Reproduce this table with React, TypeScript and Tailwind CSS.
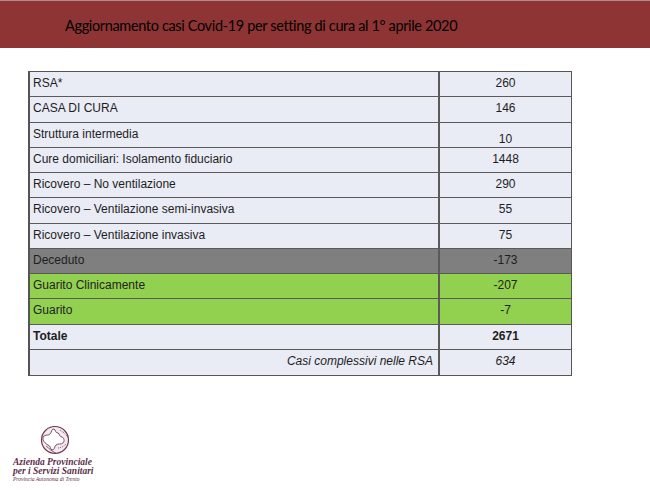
import React from "react";

type Row = {
  label: string;
  value: string;
  bg: string;
  bold?: boolean;
  italic?: boolean;
  valuePad?: string;
};

const rows: Row[] = [
  { label: "RSA*", value: "260", bg: "bg-[#e9ebf5]" },
  { label: "CASA DI CURA", value: "146", bg: "bg-[#e9ebf5]" },
  { label: "Struttura intermedia", value: "10", bg: "bg-[#e9ebf5]", valuePad: "pt-[8px]" },
  { label: "Cure domiciliari: Isolamento fiduciario", value: "1448", bg: "bg-[#e9ebf5]" },
  { label: "Ricovero – No ventilazione", value: "290", bg: "bg-[#e9ebf5]" },
  { label: "Ricovero – Ventilazione semi-invasiva", value: "55", bg: "bg-[#e9ebf5]" },
  { label: "Ricovero – Ventilazione invasiva", value: "75", bg: "bg-[#e9ebf5]" },
  { label: "Deceduto", value: "-173", bg: "bg-[#7f7f7f]" },
  { label: "Guarito Clinicamente", value: "-207", bg: "bg-[#92d050]" },
  { label: "Guarito", value: "-7", bg: "bg-[#92d050]" },
  { label: "Totale", value: "2671", bg: "bg-[#e9ebf5]", bold: true },
  { label: "Casi complessivi nelle RSA", value: "634", bg: "bg-[#e9ebf5]", italic: true },
];

function Logo() {
  return (
    <div className="flex flex-col items-start pl-[13px]">
      <svg width="34" height="32" viewBox="0 0 34 32" className="ml-[25px]">
        <circle cx="17" cy="16" r="13.5" fill="#f3eaef" stroke="#6b3a55" strokeWidth="1.2" />
        <path
          d="M5 13 C8 10 10 12 12 10 C14 8 13 5 16 5 C18 6 17 9 20 9 C22 10 21 13 24 13 C26 14 27 17 25 19 C23 21 20 19 18 21 C16 23 17 26 14 26 C12 25 13 22 10 21 C8 20 6 18 5 16 Z"
          fill="#ffffff"
          stroke="#6b3a55"
          strokeWidth="0.9"
        />
        <path d="M8 22 C11 24 14 28 18 29" fill="none" stroke="#6b3a55" strokeWidth="0.8" />
        <path d="M22 6 C25 8 28 10 30 14" fill="none" stroke="#6b3a55" strokeWidth="0.8" strokeDasharray="1 1" />
        <path d="M20 24 C23 24 26 22 28 20" fill="none" stroke="#6b3a55" strokeWidth="0.8" strokeDasharray="1 1" />
      </svg>
      <div
        className="mt-[2px] text-[#5b3048] italic font-bold text-[9.5px]"
        style={{ fontFamily: '"Liberation Serif", "DejaVu Serif", serif' }}
      >
        <div className="leading-[9px]">Azienda Provinciale</div>
        <div className="leading-[9px]">per i Servizi Sanitari</div>
        <div className="text-[5.5px] font-normal leading-[6px]">Provincia Autonoma di Trento</div>
      </div>
    </div>
  );
}

export default function App() {
  return (
    <div className="w-[650px] h-[490px] bg-white relative overflow-hidden">
      <div className="h-[48px] bg-[#8f3434] border-t border-[#b58a8a] flex items-center pl-[65px] pt-[3px]">
        <span
          className="text-black text-[14.5px] tracking-[-0.35px]"
          style={{ fontFamily: 'Lato, "Open Sans", sans-serif' }}
        >
          Aggiornamento casi Covid-19 per setting di cura al 1° aprile 2020
        </span>
      </div>

      <div
        className="ml-[28px] mt-[23px] w-[544px] border border-[#555] border-l-2 grid grid-cols-[408px_133px] text-[12px] text-[#1e1e1e]"
        style={{ fontFamily: '"Liberation Sans", Arial, sans-serif' }}
      >
        {rows.map((r, i) => (
          <React.Fragment key={i}>
            <div
              className={`h-[25.25px] ${r.bg} ${i < rows.length - 1 ? "border-b" : ""} border-[#5a5a5a] flex items-center ${
                r.italic ? "justify-end pr-[5px] italic" : "pl-[3px]"
              } ${r.bold ? "font-bold" : ""} pb-[2px]`}
            >
              {r.label}
            </div>
            <div
              className={`h-[25.25px] ${r.bg} ${i < rows.length - 1 ? "border-b" : ""} border-l-2 border-[#5a5a5a] flex items-center justify-center ${
                r.italic ? "italic" : ""
              } ${r.bold ? "font-bold" : ""} ${r.valuePad ?? "pb-[2px]"}`}
            >
              {r.value}
            </div>
          </React.Fragment>
        ))}
      </div>

      <div className="mt-[48px]">
        <Logo />
      </div>
    </div>
  );
}
